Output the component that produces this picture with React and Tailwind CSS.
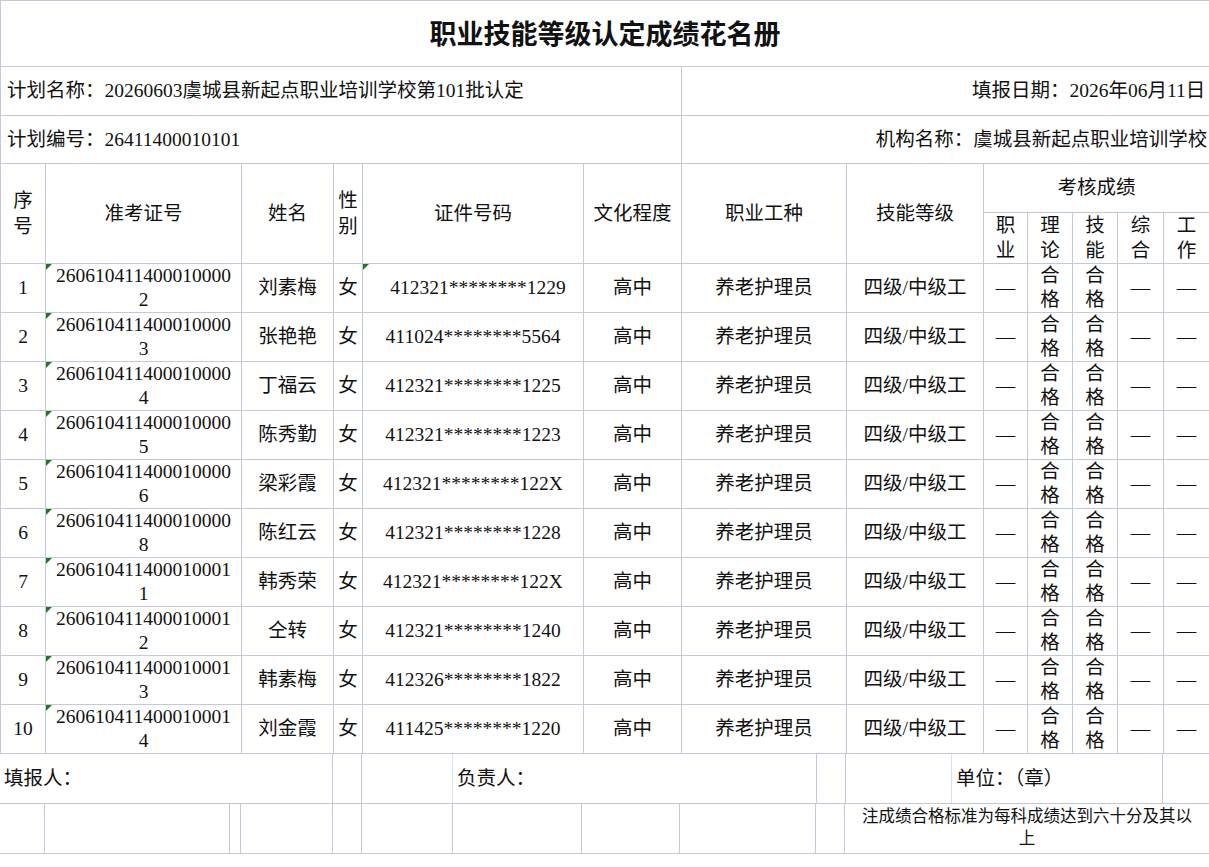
const F = { fontFamily: '"Liberation Serif","Noto Sans CJK SC",serif' };
const B = "border border-[#c3c9da]";
const rows = [
  ["1","2606104114000100002","刘素梅","412321********1229"],
  ["2","2606104114000100003","张艳艳","411024********5564"],
  ["3","2606104114000100004","丁福云","412321********1225"],
  ["4","2606104114000100005","陈秀勤","412321********1223"],
  ["5","2606104114000100006","梁彩霞","412321********122X"],
  ["6","2606104114000100008","陈红云","412321********1228"],
  ["7","2606104114000100011","韩秀荣","412321********122X"],
  ["8","2606104114000100012","仝转","412321********1240"],
  ["9","2606104114000100013","韩素梅","412326********1822"],
  ["10","2606104114000100014","刘金霞","411425********1220"],
];
const Tri = () => <span className="absolute left-0 top-0 w-0 h-0 border-t-[6px] border-r-[6px] border-t-[#1f7a1f] border-r-transparent" />;
const widths = [45,196,92,29,221,98,165,137,44,45,45,46,46];
export default function App() {
  return (
    <div style={F} className="w-[1209px] h-[867px] bg-white text-[19.5px] text-[#111] overflow-hidden">
      <table className="border-collapse table-fixed w-[1209px]">
        <colgroup>{widths.map((w,i)=><col key={i} style={{width:w}} />)}</colgroup>
        <tbody>
          <tr className="h-[66px]"><td colSpan={13} className={`${B} text-center text-[27px] font-semibold`} style={{fontFamily:'"Noto Sans CJK SC",sans-serif'}}>职业技能等级认定成绩花名册</td></tr>
          <tr className="h-[49px]">
            <td colSpan={6} className={`${B} pl-[6px] whitespace-nowrap`}>计划名称：20260603虞城县新起点职业培训学校第101批认定</td>
            <td colSpan={7} className={`${B} text-right pr-[4px]`}>填报日期：2026年06月11日</td>
          </tr>
          <tr className="h-[48px]">
            <td colSpan={6} className={`${B} pl-[6px]`}>计划编号：26411400010101</td>
            <td colSpan={7} className={`${B} text-right pr-[2px] whitespace-nowrap`}>机构名称：虞城县新起点职业培训学校</td>
          </tr>
          <tr className="h-[49px] text-center leading-[26px]">
            <td rowSpan={2} className={B}>序<br/>号</td>
            <td rowSpan={2} className={B}>准考证号</td>
            <td rowSpan={2} className={B}>姓名</td>
            <td rowSpan={2} className={B}>性<br/>别</td>
            <td rowSpan={2} className={B}>证件号码</td>
            <td rowSpan={2} className={B}>文化程度</td>
            <td rowSpan={2} className={B}>职业工种</td>
            <td rowSpan={2} className={B}>技能等级</td>
            <td colSpan={5} className={B}>考核成绩</td>
          </tr>
          <tr className="h-[49px] text-center leading-[25px]">
            {[["职","业"],["理","论"],["技","能"],["综","合"],["工","作"]].map(([a,b])=><td key={a} className={B}>{a}<br/>{b}</td>)}
          </tr>
          {rows.map((r,i)=>(
            <tr key={i} className="h-[49px] text-center leading-[24px]">
              <td className={B}>{r[0]}</td>
              <td className={`${B} relative whitespace-nowrap`}><Tri/>{r[1].slice(0,18)}<br/>{r[1].slice(18)}</td>
              <td className={B}>{r[2]}</td>
              <td className={`${B}`}>女</td>
              <td className={`${B} relative whitespace-nowrap`}>{i===0 && <Tri/>}<span className={i===0?"pl-[10px]":""}>{r[3]}</span></td>
              <td className={B}>高中</td>
              <td className={B}>养老护理员</td>
              <td className={`${B} whitespace-nowrap`}>四级/中级工</td>
              <td className={B}>—</td>
              <td className={B}>合<br/>格</td>
              <td className={B}>合<br/>格</td>
              <td className={B}>—</td>
              <td className={B}>—</td>
            </tr>
          ))}
        </tbody>
      </table>
      <div className="flex h-[50px] border-b border-[#c3c9da]">
        <div className="w-[333px] border-r border-[#c3c9da] flex items-center pl-[4px]">填报人：</div>
        <div className="w-[29px] border-r border-[#c3c9da]" />
        <div className="w-[91px] border-r border-[#dde1ea]" />
        <div className="w-[364px] border-r border-[#c3c9da] flex items-center pl-[4px]">负责人：</div>
        <div className="w-[29px] border-r border-[#c3c9da]" />
        <div className="w-[106px] border-r border-[#dde1ea]" />
        <div className="w-[211px] border-r border-[#c3c9da] flex items-center pl-[4px]">单位：（章）</div>
        <div className="flex-1" />
      </div>
      <div className="flex h-[50px] border-b border-[#c3c9da]">
        {[45,185,11,92,29,91,129,98,136,29].map((w,i)=><div key={i} style={{width:w}} className="border-r border-[#c3c9da]" />)}
        <div className="flex-1 text-center text-[16.5px] leading-[22px] whitespace-nowrap" style={{fontFamily:'"Noto Sans CJK SC",sans-serif'}}>注成绩合格标准为每科成绩达到六十分及其以<br/>上</div>
      </div>
    </div>
  );
}
